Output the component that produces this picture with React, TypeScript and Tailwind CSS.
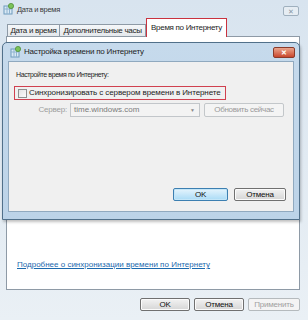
import React from "react";

const font = { fontFamily: '"Liberation Sans", Arial, sans-serif' };

function DtIcon() {
  return (
    <svg width="11" height="12" viewBox="0 0 11 12">
      <rect x="1" y="3" width="8" height="8" fill="#d9e9f5" stroke="#6f9bbd" strokeWidth="1" />
      <line x1="1" y1="6" x2="9" y2="6" stroke="#8fb3cf" />
      <line x1="4" y1="3" x2="4" y2="11" stroke="#8fb3cf" />
      <line x1="6.5" y1="3" x2="6.5" y2="11" stroke="#8fb3cf" />
      <circle cx="8" cy="3" r="2.6" fill="#7cc35a" stroke="#4f8f3a" strokeWidth="0.8" />
    </svg>
  );
}

function Btn({ children, w, def, disabled }: { children: React.ReactNode; w: string; def?: boolean; disabled?: boolean }) {
  return (
    <div
      className={
        "h-[13px] flex items-center justify-center rounded-[2px] border text-[8px] tracking-[-0.2px] leading-none " +
        w +
        (def
          ? " border-[#3c7fb1] bg-gradient-to-b from-[#e5f4fc] to-[#a9dbf6] shadow-[inset_0_0_0_1px_#c4e6f8] text-[#111]"
          : disabled
          ? " border-[#b5babd] bg-[#f4f4f4] text-[#a0a0a0]"
          : " border-[#707070] bg-gradient-to-b from-[#f2f2f2] to-[#d6d6d6] shadow-[inset_0_0_0_1px_#fbfbfb] text-[#111]")
      }
    >
      {children}
    </div>
  );
}

export default function App() {
  return (
    <div className="w-[308px] h-[320px] relative overflow-hidden bg-gradient-to-b from-[#d8e4ef] to-[#eaf0f5] text-[#1e1e1e]" style={font}>
      {/* outer title bar */}
      <div className="h-[17px] flex items-center pl-[3px] pr-[9px]">
        <DtIcon />
        <span className="ml-[3px] mt-[2px] text-[7.5px] tracking-[-0.3px] leading-none text-[#3a3a3a]">Дата и время</span>
        <div className="ml-auto mt-[5px] w-[16px] h-[10px] border border-[#9fb0be] rounded-[2px] bg-[#e6edf3] flex items-center justify-center text-[7px] text-[#8797a5] leading-none">✕</div>
      </div>
      {/* tabs */}
      <div className="h-[19px] pl-[7px] flex items-end text-[8px] tracking-[-0.3px] leading-none">
        <div className="w-[53px] h-[12px] flex items-center justify-center border border-b-0 border-[#8e9aa6] bg-gradient-to-b from-[#f5f7f9] to-[#e4e8ec]">Дата и время</div>
        <div className="w-[86px] h-[12px] flex items-center justify-center border border-b-0 border-l-0 border-[#8e9aa6] bg-gradient-to-b from-[#f5f7f9] to-[#e4e8ec]">Дополнительные часы</div>
        <div className="w-[81px] h-[19px] flex items-center justify-center border border-[#c9323f] border-b-0 bg-white mb-[-1px] relative z-10">Время по Интернету</div>
      </div>
      {/* tab panel */}
      <div className="ml-[6px] mr-[8px] h-[254px] border border-[#8e9aa6] bg-white flex flex-col justify-end pb-[19px] pl-[10px]">
        <span className="text-[8px] leading-[10px] text-[#1c69ad] underline whitespace-nowrap">Подробнее о синхронизации времени по Интернету</span>
      </div>
      {/* bottom buttons */}
      <div className="mt-[8px] pr-[8px] flex justify-end gap-[4px]">
        <Btn w="w-[50px]">OK</Btn>
        <Btn w="w-[50px]">Отмена</Btn>
        <Btn w="w-[52px]" disabled>Применить</Btn>
      </div>

      {/* inner dialog */}
      <div className="absolute left-[2px] top-[42px] w-[298px] h-[178px] rounded-t-[5px] border border-[#51708a] bg-gradient-to-b from-[#c6daec] to-[#bcd3e8] shadow-[1px_2px_3px_rgba(0,0,0,0.25)] flex flex-col">
        <div className="h-[18px] flex items-center pl-[7px] pr-[4px]">
          <DtIcon />
          <span className="ml-[3px] text-[8px] tracking-[-0.2px] leading-none text-[#1e1e1e]">Настройка времени по Интернету</span>
          <div className="ml-auto w-[22px] h-[11px] rounded-[2px] border border-[#8a3a2a] bg-gradient-to-b from-[#e9a48c] to-[#c8452c] flex items-center justify-center text-[7px] text-white leading-none font-bold">✕</div>
        </div>
        <div className="mx-[5px] h-[151px] border border-[#90a9bf] bg-[#f0f0f0] flex flex-col">
          <div className="pl-[7px] pt-[8px] text-[7px] tracking-[-0.4px] leading-[9px]">Настройте время по Интернету:</div>
          <div className="ml-[5px] mt-[7px] w-[212px] h-[14px] border border-[#d0404f] flex items-center pl-[3px]">
            <div className="w-[9px] h-[9px] shrink-0 border border-[#8e8f8f] bg-gradient-to-br from-[#e3e3e3] to-[#fbfbfb]" />
            <span className="ml-[2px] text-[8px] tracking-[-0.1px] leading-none whitespace-nowrap">Синхронизировать с сервером времени в Интернете</span>
          </div>
          <div className="mt-[3px] flex items-center text-[8px] leading-none">
            <span className="w-[61px] text-right pr-[3px] tracking-[-0.2px] text-[#9d9d9d]">Сервер:</span>
            <div className="w-[130px] h-[14px] border border-[#c2c6ca] bg-[#f3f3f3] flex items-center pl-[3px] text-[#7b7b7b]">
              <span>time.windows.com</span>
              <span className="ml-auto mr-[4px] text-[5px] text-[#8a8a8a]">▼</span>
            </div>
            <div className="ml-[4px] w-[80px] h-[14px] border border-[#c3c7ca] rounded-[2px] bg-[#f4f4f4] flex items-center justify-center tracking-[-0.3px] text-[#9a9a9a]">Обновить сейчас</div>
          </div>
          <div className="mt-auto mb-[10px] pr-[7px] flex justify-end gap-[6px]">
            <Btn w="w-[55px]" def>OK</Btn>
            <Btn w="w-[52px]">Отмена</Btn>
          </div>
        </div>
      </div>
    </div>
  );
}
